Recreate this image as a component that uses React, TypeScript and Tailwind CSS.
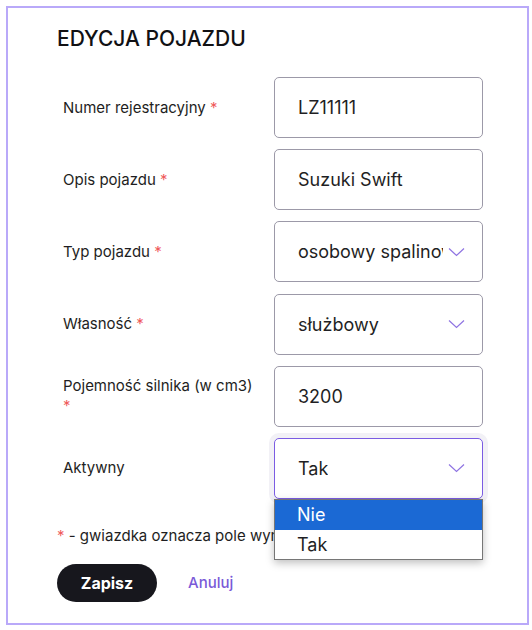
import * as React from "react";

type Field = {
  label: string;
  value: string;
  required?: boolean;
  select?: boolean;
  open?: boolean;
};

const fields: Field[] = [
  { label: "Numer rejestracyjny", value: "LZ11111", required: true },
  { label: "Opis pojazdu", value: "Suzuki Swift", required: true },
  { label: "Typ pojazdu", value: "osobowy spalinowy", required: true, select: true },
  { label: "Własność", value: "służbowy", required: true, select: true },
  { label: "Pojemność silnika (w cm3)", value: "3200", required: true },
  { label: "Aktywny", value: "Tak", select: true, open: true },
];

function Chevron() {
  return (
    <svg
      width="17"
      height="10"
      viewBox="0 0 17 10"
      fill="none"
      className="absolute right-[17px] top-1/2 -translate-y-1/2"
    >
      <path d="M1 1.5l7.5 7 7.5-7" stroke="#8f74e2" strokeWidth="1.2" />
    </svg>
  );
}

function Control({ field }: { field: Field }) {
  const border = field.open
    ? "border-[#7b5ce3] shadow-[0_0_0_5px_#f2f1f6]"
    : "border-[#9c99a8]";
  return (
    <div className="relative">
      <div
        className={`relative flex h-[61px] w-[209px] items-center rounded-[5px] border bg-white pl-[23px] text-[18px] text-[#1f1f24] ${border} ${
          field.select ? "pr-[39px]" : "pr-3"
        }`}
      >
        <span className="overflow-hidden whitespace-nowrap">{field.value}</span>
        {field.select && <Chevron />}
      </div>
      {field.open && (
        <div className="absolute left-0 top-[61px] z-10 w-[209px] border border-[#767676] bg-white shadow-[0_3px_8px_rgba(0,0,0,0.25)]">
          <div className="flex h-[30px] items-center bg-[#1b69d4] pl-[22px] text-[18px] text-white">
            Nie
          </div>
          <div className="flex h-[29px] items-center pl-[22px] text-[18px] text-[#1f1f24]">
            Tak
          </div>
        </div>
      )}
    </div>
  );
}

export default function App() {
  return (
    <div className="min-h-screen bg-white pl-[6px] pt-[6px] font-['Inter',sans-serif]">
      <div className="h-[619px] w-[523px] border-2 border-[#b9a9f9] pl-[49px] pt-[17px]">
        <h1 className="text-[21px] font-medium leading-[28px] text-[#111114]">
          EDYCJA POJAZDU
        </h1>
        <div className="mt-[24px] flex flex-col gap-[11.2px]">
          {fields.map((field) => (
            <div key={field.label} className="flex items-center">
              <div className="w-[217px] pl-[6px] pr-[16px] text-[15px] leading-[20px] text-[#1e1e22]">
                {field.label}
                {field.required && <span className="text-[#ef5b5b]"> *</span>}
              </div>
              <Control field={field} />
            </div>
          ))}
        </div>
        <p className="mt-[26px] text-[15px] leading-[22px] text-[#1e1e22]">
          <span className="text-[#ef5b5b]">*</span> - gwiazdka oznacza pole
          wymagane
        </p>
        <div className="mt-[17px] flex items-center">
          <button className="h-[38px] w-[100px] rounded-full bg-[#17171d] text-[16px] font-bold text-white">
            Zapisz
          </button>
          <button className="ml-[31px] text-[15px] font-medium text-[#7a5ad8]">
            Anuluj
          </button>
        </div>
      </div>
    </div>
  );
}
